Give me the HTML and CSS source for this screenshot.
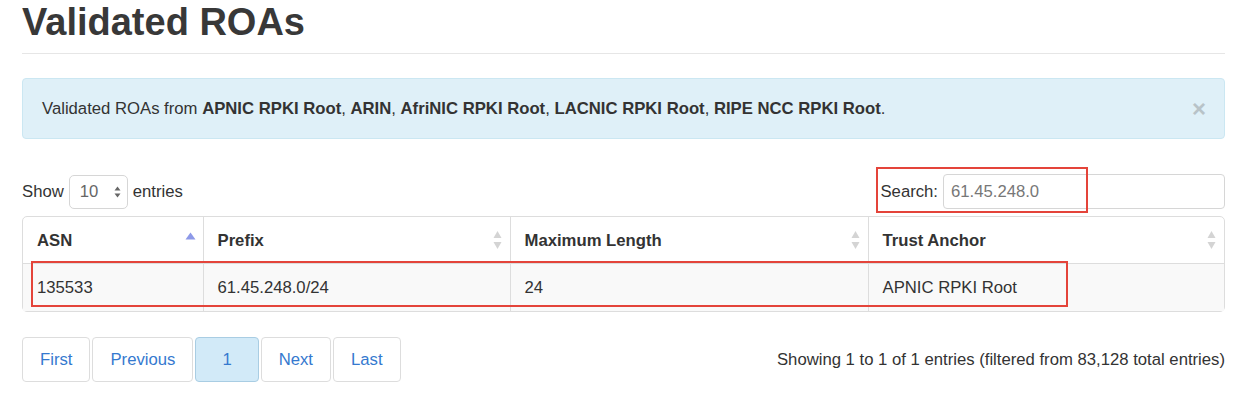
FILE: index.html
```html
<!DOCTYPE html>
<html lang="en">
<head>
    <meta charset="UTF-8">
    <meta name="viewport" content="width=device-width, initial-scale=1.0">
    <title>Validated ROAs</title>
    <link rel="stylesheet" href="styles.css">
</head>
<body>
    <div class="page">
        <h1 class="page-title">Validated ROAs</h1>

        <div class="alert">
            <span>Validated ROAs from <b>APNIC RPKI Root</b>, <b>ARIN</b>, <b>AfriNIC RPKI Root</b>, <b>LACNIC RPKI Root</b>, <b>RIPE NCC RPKI Root</b>.</span>
            <button class="alert-close">&times;</button>
        </div>

        <div class="table-controls">
            <label class="length-control">
                Show
                <span class="select-box">10
                    <svg class="select-arrows" width="7" height="12" viewBox="0 0 7 12">
                        <path d="M3.5 0.5 L6.5 4.5 L0.5 4.5 Z" fill="#666"/>
                        <path d="M3.5 11.5 L6.5 7.5 L0.5 7.5 Z" fill="#666"/>
                    </svg>
                </span>
                entries
            </label>
            <label class="search-control">
                Search:
                <input type="search" class="search-input" value="61.45.248.0">
                <span class="mark mark-search"></span>
            </label>
        </div>

        <div class="table-wrap">
            <table class="roa-table">
                <colgroup>
                    <col style="width: 180px">
                    <col style="width: 307px">
                    <col style="width: 358px">
                    <col>
                </colgroup>
                <thead>
                    <tr>
                        <th>ASN
                            <svg class="sort-icon" width="11" height="8" viewBox="0 0 11 8">
                                <path d="M5.5 0.5 L10.5 7.5 L0.5 7.5 Z" fill="#8d99e8"/>
                            </svg>
                        </th>
                        <th>Prefix
                            <svg class="sort-icon" width="9" height="20" viewBox="0 0 9 20">
                                <path d="M4.5 1 L8.5 8 L0.5 8 Z" fill="#d4d4d4"/>
                                <path d="M4.5 19 L8.5 12 L0.5 12 Z" fill="#d4d4d4"/>
                            </svg>
                        </th>
                        <th>Maximum Length
                            <svg class="sort-icon" width="9" height="20" viewBox="0 0 9 20">
                                <path d="M4.5 1 L8.5 8 L0.5 8 Z" fill="#d4d4d4"/>
                                <path d="M4.5 19 L8.5 12 L0.5 12 Z" fill="#d4d4d4"/>
                            </svg>
                        </th>
                        <th>Trust Anchor
                            <svg class="sort-icon" width="9" height="20" viewBox="0 0 9 20">
                                <path d="M4.5 1 L8.5 8 L0.5 8 Z" fill="#d4d4d4"/>
                                <path d="M4.5 19 L8.5 12 L0.5 12 Z" fill="#d4d4d4"/>
                            </svg>
                        </th>
                    </tr>
                </thead>
                <tbody>
                    <tr>
                        <td>135533</td>
                        <td>61.45.248.0/24</td>
                        <td>24</td>
                        <td>APNIC RPKI Root</td>
                    </tr>
                </tbody>
            </table>
            <span class="mark mark-row"></span>
        </div>

        <div class="table-footer">
            <ul class="pagination">
                <li><a href="#">First</a></li>
                <li><a href="#">Previous</a></li>
                <li class="active"><a href="#">1</a></li>
                <li><a href="#">Next</a></li>
                <li><a href="#">Last</a></li>
            </ul>
            <div class="table-info">Showing 1 to 1 of 1 entries (filtered from 83,128 total entries)</div>
        </div>
    </div>
</body>
</html>
```

FILE: styles.css
```css
body {
    margin: 0;
    font-family: 'Liberation Sans', Arial, sans-serif;
    font-size: 16.7px;
    line-height: 24px;
    color: #333;
    background-color: #fff;
}

.page {
    width: 1203px;
    margin-left: 22px;
}

.page-title {
    margin: 0;
    padding: 1px 0 10px;
    font-size: 38px;
    line-height: 42px;
    font-weight: 700;
    color: #383838;
    border-bottom: 1px solid #e6e6e6;
}

.alert {
    display: flex;
    justify-content: space-between;
    align-items: flex-start;
    margin-top: 24px;
    padding: 18px 19px 17px;
    background-color: #dff0f8;
    border: 1px solid #cbe7f2;
    border-radius: 4px;
}

.alert b {
    font-weight: 700;
}

.alert-close {
    border: none;
    background: transparent;
    padding: 0;
    margin-right: -1px;
    font-family: 'Liberation Sans', Arial, sans-serif;
    font-size: 24px;
    font-weight: 700;
    line-height: 24px;
    height: 24px;
    color: #b8c3c8;
    cursor: pointer;
}

.table-controls {
    display: flex;
    justify-content: space-between;
    align-items: center;
    margin-top: 35px;
    height: 35px;
}

.length-control {
    display: flex;
    align-items: center;
    gap: 5px;
}

.select-box {
    display: flex;
    align-items: center;
    justify-content: space-between;
    box-sizing: border-box;
    width: 59px;
    height: 34px;
    padding: 0 6px 0 10px;
    border: 1px solid #d6d6d6;
    border-radius: 5px;
    color: #666;
    background-color: #fff;
}

.search-control {
    position: relative;
    display: flex;
    align-items: center;
    gap: 5px;
}

.search-input {
    box-sizing: border-box;
    width: 282px;
    height: 35px;
    padding: 0 7px;
    border: 1px solid #d6d6d6;
    border-radius: 4px;
    font-family: 'Liberation Sans', Arial, sans-serif;
    font-size: 16.7px;
    color: #777;
    outline: none;
}

.mark {
    position: absolute;
    border: 2px solid #e4443a;
    pointer-events: none;
}

.mark-search {
    left: -4px;
    top: -7px;
    width: 208px;
    height: 42px;
}

.table-wrap {
    position: relative;
    margin-top: 7px;
    border: 1px solid #ddd;
    border-radius: 5px;
}

.roa-table {
    width: 100%;
    border-collapse: collapse;
    table-layout: fixed;
}

.roa-table th,
.roa-table td {
    text-align: left;
    padding: 12px 14px 10px;
    border-left: 1px solid #ddd;
}

.roa-table th:first-child,
.roa-table td:first-child {
    border-left: none;
}

.roa-table th {
    position: relative;
    font-weight: 700;
    border-bottom: 1px solid #ddd;
}

.roa-table td {
    padding: 12px 14px 11px;
    background-color: #f9f9f9;
}

.sort-icon {
    position: absolute;
    right: 8px;
    top: 13px;
}

.roa-table th:first-child .sort-icon {
    right: 7px;
    top: 15px;
}

.mark-row {
    left: 8px;
    top: 44px;
    width: 1033px;
    height: 42px;
}

.table-footer {
    display: flex;
    justify-content: space-between;
    align-items: center;
    margin-top: 25px;
}

.pagination {
    display: flex;
    gap: 2px;
    list-style: none;
    margin: 0;
    padding: 0;
}

.pagination a {
    display: block;
    padding: 10px 17px 9px;
    border: 1px solid #ddd;
    border-radius: 4px;
    background-color: #fff;
    color: #3579cf;
    text-decoration: none;
}

.pagination .active a {
    padding-left: 26px;
    padding-right: 26px;
    background-color: #d2eaf8;
    border-color: #a9cde3;
}

.table-info {
    color: #333;
}
```
